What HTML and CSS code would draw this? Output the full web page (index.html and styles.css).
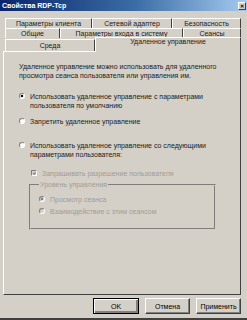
FILE: index.html
```html
<!DOCTYPE html>
<html lang="ru">
<head>
<meta charset="UTF-8">
<title>Свойства RDP-Tcp</title>
<link rel="stylesheet" href="styles.css">
</head>
<body>

<div class="window">
  <div class="titlebar">
    <span class="title">Свойства RDP-Tcp</span>
    <span class="close">&#x2715;</span>
  </div>

  <div class="tabs">
    <div class="tab-row">
      <div class="tab" style="width: 87px">Параметры клиента</div>
      <div class="tab" style="width: 80px">Сетевой адаптер</div>
      <div class="tab tab-last">Безопасность</div>
    </div>
    <div class="tab-row">
      <div class="tab" style="width: 55px">Общие</div>
      <div class="tab" style="width: 123px">Параметры входа в систему</div>
      <div class="tab tab-last">Сеансы</div>
    </div>
    <div class="tab-row tab-row-front">
      <div class="tab" style="width: 90px">Среда</div>
      <div class="tab tab-active">Удаленное управление</div>
    </div>
  </div>

  <div class="panel">
    <p class="intro">Удаленное управление можно использовать для удаленного просмотра сеанса пользователя или управления им.</p>

    <label class="option">
      <span class="radio checked"></span>
      <span>Использовать удаленное управление с параметрами пользователя по умолчанию</span>
    </label>
    <label class="option">
      <span class="radio"></span>
      <span>Запретить удаленное управление</span>
    </label>
    <label class="option option-gap">
      <span class="radio"></span>
      <span>Использовать удаленное управление со следующими параметрами пользователя:</span>
    </label>

    <div class="sub disabled">
      <label class="option">
        <span class="check checked"></span>
        <span>Запрашивать разрешение пользователя</span>
      </label>
      <fieldset class="group">
        <legend>Уровень управления</legend>
        <label class="option">
          <span class="radio checked"></span>
          <span>Просмотр сеанса</span>
        </label>
        <label class="option">
          <span class="radio"></span>
          <span>Взаимодействие с этим сеансом</span>
        </label>
      </fieldset>
    </div>
  </div>

  <div class="buttons">
    <button class="btn btn-default">OK</button>
    <button class="btn">Отмена</button>
    <button class="btn">Применить</button>
  </div>
</div>

</body>
</html>
```

FILE: styles.css
```css
body {
  margin: 0;
  padding: 0;
  font-family: "Liberation Sans", Arial, sans-serif;
  font-size: 7px;
  color: #1a1a1a;
}
.window {
  width: 247px;
  height: 320px;
  box-sizing: border-box;
  background-color: #d4d0c8;
  border-bottom: 2px solid #404040;
  overflow: hidden;
}
.titlebar {
  height: 11px;
  display: flex;
  align-items: center;
  justify-content: space-between;
  padding: 0 1px 0 2px;
  background: linear-gradient(90deg, #0a246a, #3a6ea5 55%, #a6caf0);
}
.title {
  color: #fff;
  font-weight: bold;
  font-size: 7px;
  line-height: 11px;
}
.close {
  width: 8px;
  height: 8px;
  box-sizing: border-box;
  background-color: #d4d0c8;
  border: 1px solid;
  border-color: #fff #404040 #404040 #fff;
  color: #000;
  font-size: 5px;
  line-height: 6px;
  text-align: center;
  font-weight: bold;
}
.tabs {
  padding: 7px 6px 0 5px;
}
.tab-row {
  display: flex;
  height: 10px;
}
.tab {
  box-sizing: border-box;
  height: 10px;
  border-top: 1px solid #fff;
  border-left: 1px solid #fff;
  border-right: 1px solid #404040;
  text-align: center;
  line-height: 9px;
  white-space: nowrap;
}
.tab-last {
  flex: 1;
}
.tab-row-front {
  height: 13px;
  align-items: flex-end;
}
.tab-row-front .tab {
  height: 12px;
  line-height: 12px;
}
.tab-row-front .tab-active {
  flex: 1;
  height: 15px;
  line-height: 8px;
  margin-bottom: -1px;
  position: relative;
  z-index: 1;
  background-color: #d4d0c8;
}
.panel {
  box-sizing: border-box;
  height: 244px;
  margin: 0 6px 0 3px;
  padding: 10px 10px 0 15px;
  border: 1px solid;
  border-color: #fff #404040 #404040 #fff;
}
.intro {
  margin: 0 0 12px 0;
  line-height: 9px;
}
.option {
  display: flex;
  align-items: flex-start;
  gap: 5px;
  line-height: 9px;
  margin-bottom: 7px;
}
.option-gap {
  margin-top: 15px;
}
.radio,
.check {
  flex: none;
  width: 6px;
  height: 6px;
  margin-top: 1px;
  box-sizing: border-box;
  background-color: #fff;
  border: 1px solid;
  border-color: #808080 #fff #fff #808080;
}
.radio {
  border-radius: 50%;
}
.radio.checked {
  background: radial-gradient(circle, #000 1.3px, #fff 1.6px);
}
.check.checked {
  background: #fff;
  position: relative;
}
.check.checked::after {
  content: "";
  position: absolute;
  left: 0;
  top: 0;
  width: 2px;
  height: 1px;
  border-left: 1px solid #808080;
  border-bottom: 1px solid #808080;
  transform: translate(1px, 1px) rotate(-45deg);
}
.sub {
  padding-left: 12px;
  margin-top: 10px;
}
.disabled {
  color: #a09c96;
}
.disabled .radio,
.disabled .check {
  background-color: #d4d0c8;
}
.disabled .radio.checked {
  background: radial-gradient(circle, #808080 1.3px, #d4d0c8 1.6px);
}
.disabled .check.checked {
  background-color: #d4d0c8;
}
.group {
  width: 187px;
  min-width: 0;
  box-sizing: border-box;
  margin: -4px 0 0 -2px;
  padding: 6px 8px 12px 8px;
  border: 2px groove #d4d0c8;
}
.group legend {
  padding: 0 1px;
  margin-left: 0;
  line-height: 8px;
}
.group .option {
  margin-bottom: 3px;
}
.group .option:last-child {
  margin-bottom: 0;
}
.buttons {
  display: flex;
  justify-content: flex-end;
  gap: 6px;
  padding: 3px 6px 0 0;
}
.btn {
  width: 45px;
  height: 16px;
  padding: 0;
  font-family: "Liberation Sans", Arial, sans-serif;
  font-size: 7px;
  color: #000;
  background-color: #d4d0c8;
  border: 1px solid;
  border-color: #fff #404040 #404040 #fff;
  box-shadow: inset -1px -1px #808080;
}
.btn-default {
  width: 46px;
  border: 1px solid #000;
  box-shadow: inset 1px 1px #fff, inset -2px -2px #808080;
}
```
